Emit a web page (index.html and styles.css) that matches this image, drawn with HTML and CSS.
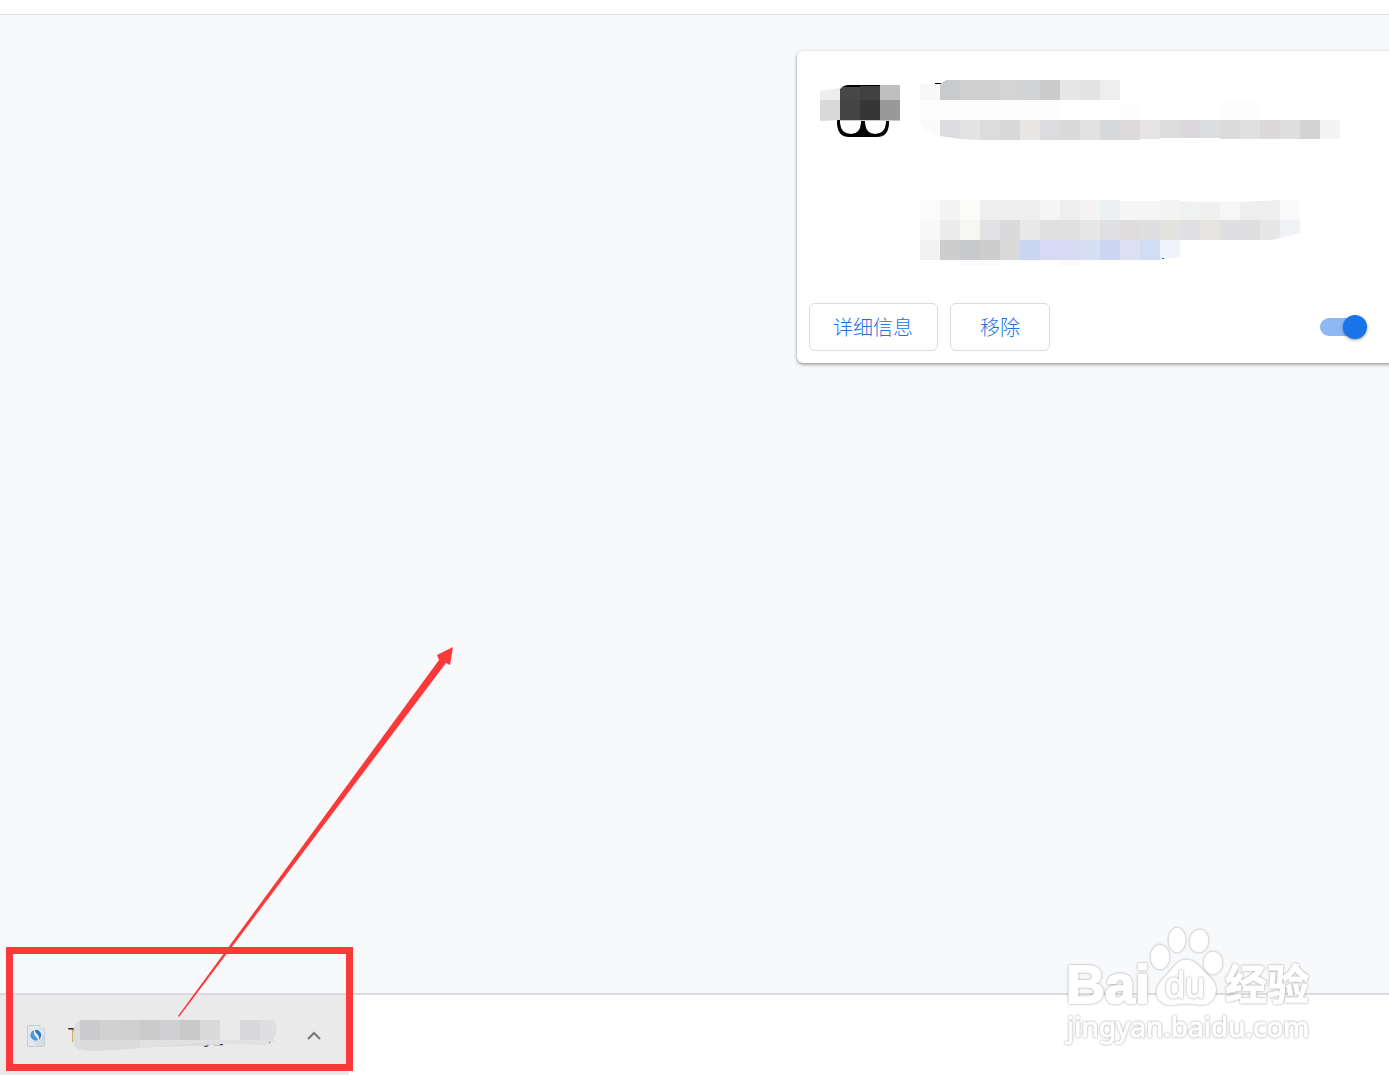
FILE: index.html
```html
<!DOCTYPE html>
<html lang="zh-CN">
<head>
<meta charset="utf-8">
<title>扩展程序</title>
<link rel="stylesheet" href="styles.css">
</head>
<body>
<header class="toolbar"></header>
<main class="extensions">
  <article class="card">
    <div class="card-body">
      <svg class="card-icon" width="80" height="54" viewBox="0 0 80 54" aria-hidden="true">
        <path d="M17 34H69V39Q68 52 57 52H29Q18 52 17 39z" fill="#000"/>
        <path d="M20 34H41V38Q40 49 31 49Q21 49 20 38z" fill="#fff"/>
        <path d="M45 34H66V38Q65 49 55 49Q46 49 45 38z" fill="#fff"/>
        <path d="M0 6L20 3V16H0z" fill="#eee"/>
        <path d="M0 15H20V35L0 36z" fill="#d9d9d9"/>
        <path d="M20 4Q24 0 30 0H60V15H20z" fill="#474747"/>
        <path d="M22 2Q25 0 30 0H60V1H43V2z" fill="#000"/>
        <path d="M40 1H60V15H40z" fill="#404040"/>
        <path d="M60 0H80V15H60z" fill="#bfbfbf"/>
        <path d="M20 15H40V35H20z" fill="#444"/>
        <path d="M40 15H60V35H40z" fill="#363636"/>
        <path d="M60 15H80V35H60z" fill="#999"/>
        <path d="M20 35H80V36H20z" fill="#ccc"/>
      </svg>
      <svg class="card-text" width="420" height="188" viewBox="0 0 420 188" aria-hidden="true">
        <path d="M0 4H20V20H0z" fill="#f9f8f7"/>
        <path d="M15 3h8v1h-8z" fill="#000"/>
        <path d="M20 4L26 0H40V20H20z" fill="#c9cacc"/>
        <path d="M40 0H80V20H40z" fill="#cfcfcf"/>
        <path d="M80 0H100V20H80z" fill="#d4d4d4"/>
        <path d="M100 0H120V20H100z" fill="#d1d3d5"/>
        <path d="M120 0H140V20H120z" fill="#cbcbcb"/>
        <path d="M140 0H160V20H140z" fill="#e7e7e7"/>
        <path d="M160 0H180V20H160z" fill="#e3e3e3"/>
        <path d="M180 0H200V20H180z" fill="#eee"/>
        <path d="M0 20H140V40H0zM200 25h20v15h-20zM300 20h40v20h-40z" fill="#fdfdfd"/>
        <path d="M0 40H20V56Q5 54 0 40z" fill="#fbfaf8"/>
        <path d="M20 40H40V59L20 56z" fill="#dcdcde"/>
        <path d="M40 40H60V60L40 59z" fill="#e3e3e4"/>
        <path d="M60 40h20v20h-20z" fill="#dedbdc"/>
        <path d="M80 40h20v20h-20z" fill="#d8d8da"/>
        <path d="M100 40h20v20h-20z" fill="#e9e7e5"/>
        <path d="M120 40h20v20h-20z" fill="#dcdcde"/>
        <path d="M140 40h20v20h-20z" fill="#dbd9da"/>
        <path d="M160 40h20v20h-20z" fill="#e2e2e2"/>
        <path d="M180 40h20v20h-20z" fill="#d6d8da"/>
        <path d="M200 40h20v20h-20z" fill="#dddadb"/>
        <path d="M220 40h20v19h-20z" fill="#e6e4e5"/>
        <path d="M240 40h20v18h-20z" fill="#ddd"/>
        <path d="M260 40h20v18h-20z" fill="#dbd9dc"/>
        <path d="M280 40h20v18h-20z" fill="#dcdde0"/>
        <path d="M300 40h20v19h-20z" fill="#dbdbdb"/>
        <path d="M320 40h20v19h-20z" fill="#e0e0e3"/>
        <path d="M340 40h20v19h-20z" fill="#dbd9da"/>
        <path d="M360 40h20v19h-20z" fill="#dfdfdf"/>
        <path d="M380 40h20v19h-20z" fill="#d3d3d5"/>
        <path d="M400 40h20v19h-20z" fill="#f4f4f4"/>
        <path d="M0 120h20v20H0z" fill="#fbfbfb"/>
        <path d="M20 120h20v20h-20z" fill="#f3f3f3"/>
        <path d="M40 120h20v20h-20z" fill="#fbfcf8"/>
        <path d="M60 120h60v20h-60z" fill="#eee"/>
        <path d="M120 120h20v20h-20z" fill="#f5f5f5"/>
        <path d="M140 120h20v20h-20z" fill="#eee"/>
        <path d="M160 120h20v20h-20z" fill="#f5f3f4"/>
        <path d="M180 120h20v20h-20z" fill="#edf0f2"/>
        <path d="M200 121h40v19h-40z" fill="#f5f5f5"/>
        <path d="M240 120h20v20h-20z" fill="#f5f3f1"/>
        <path d="M260 121l20 1v18h-20z" fill="#eff2f0"/>
        <path d="M280 122h20v18h-20z" fill="#f0f0f0"/>
        <path d="M300 122h20v18h-20z" fill="#f6f6f7"/>
        <path d="M320 122l40-2v20h-40z" fill="#eee"/>
        <path d="M360 120h20v20h-20z" fill="#fafafa"/>
        <path d="M0 140h20v20H0z" fill="#f8f8f8"/>
        <path d="M20 140h20v20h-20z" fill="#ececec"/>
        <path d="M40 140h20v20h-20z" fill="#f6f6f3"/>
        <path d="M60 140h20v20h-20z" fill="#e2e2e4"/>
        <path d="M80 140h20v20h-20z" fill="#dadadc"/>
        <path d="M100 140h20v20h-20z" fill="#e8e8e8"/>
        <path d="M120 140h40v20h-40z" fill="#e0e0e0"/>
        <path d="M160 140h20v20h-20z" fill="#e9e6e7"/>
        <path d="M180 140h20v20h-20z" fill="#e0e0e2"/>
        <path d="M200 140h20v20h-20z" fill="#dfdcdd"/>
        <path d="M220 140h20v20h-20z" fill="#dfdfe1"/>
        <path d="M240 140h20v20h-20z" fill="#e3e2df"/>
        <path d="M260 140h20v20h-20z" fill="#e0e0e3"/>
        <path d="M280 140h20v20h-20z" fill="#e6e4e1"/>
        <path d="M300 140h40v20h-40z" fill="#dfdfe1"/>
        <path d="M340 140h20v18l-8 2h-12z" fill="#e7e7e7"/>
        <path d="M360 140h20v13l-20 5z" fill="#eff1f4"/>
        <path d="M0 160h20v20H0z" fill="#f2f2f2"/>
        <path d="M20 160h20v20h-20z" fill="#cdcdcd"/>
        <path d="M40 160h20v20h-20z" fill="#c8c9cb"/>
        <path d="M60 160h20v20h-20z" fill="#cfcccd"/>
        <path d="M80 160h20v20h-20z" fill="#d9d9da"/>
        <path d="M100 160h20v20h-20z" fill="#cad5f2"/>
        <path d="M120 160h40v20h-40z" fill="#d7daf4"/>
        <path d="M160 160h20v20h-20z" fill="#d7dff4"/>
        <path d="M180 160h20v20h-20z" fill="#ccd6f1"/>
        <path d="M200 160h20v20h-20z" fill="#dce1f4"/>
        <path d="M220 160h20v20h-20z" fill="#d2ddf3"/>
        <path d="M240 160h20v17l-20 2z" fill="#f1f3fc"/>
        <path d="M242 178h2v1h-2z" fill="#1a5ee0"/>
        <path d="M40 180h40v6H40zM140 180h20v6h-20z" fill="#fbfbfd"/>
      </svg>
    </div>
    <div class="card-actions">
      <button class="btn btn-details" type="button">详细信息</button>
      <button class="btn btn-remove" type="button">移除</button>
      <input class="toggle" type="checkbox" aria-label="启用" checked>
    </div>
  </article>
</main>
<footer class="shelf">
  <div class="download">
    <svg class="file-icon" width="20" height="24" viewBox="0 0 20 24" aria-hidden="true">
      <path d="M1.500 1.500H14L18.500 5V22.500H1.500z" fill="#e4e7eb" stroke="#c6ccd5"/>
      <path d="M14 1V5H18" fill="#f3f4f6" stroke="#cdd3db"/>
      <path d="M6 16L14 8L18 12V22H11z" fill="#d8dbe0"/>
      <circle cx="10" cy="11" r="6" fill="#f3f6fa"/>
      <path d="M8 6C4 8 3 12 6 15C8 17 11 17 12 16C12 13 7 13 8 6z" fill="#4a9be0"/>
      <path d="M13 16C16 13 16 9 13 7C11 5 9 6 9 7C9 10 14 10 13 16z" fill="#2e7bc8"/>
    </svg>
    <svg class="file-name" width="212" height="36" viewBox="0 0 212 36" aria-hidden="true">
      <text x="0" y="24" class="name-text">T</text>
      <text x="136" y="24" class="name-text">y_</text>
      <path d="M5 14Q6 5 12 2V32Q7 30 5 24z" fill="#dcdddd"/>
      <path d="M12 22H152V27L90 29L45 32Q20 34 12 31z" fill="#dbdbdc"/>
      <path d="M72 22H208Q204 26 198 27L130 25L72 30z" fill="#e1e1e2"/>
      <path d="M12 2h20v20h-20z" fill="#cbcbcd"/>
      <path d="M32 2h20v20h-20z" fill="#d1d1d2"/>
      <path d="M52 2h20v20h-20z" fill="#cfcfcf"/>
      <path d="M72 2h20v20h-20z" fill="#cbcbcb"/>
      <path d="M92 2h20v20h-20z" fill="#d0d0d2"/>
      <path d="M112 2h20v20h-20z" fill="#c9c9c9"/>
      <path d="M132 2h20v20h-20z" fill="#dadadc"/>
      <path d="M152 2h20v20h-20z" fill="#eaeaea"/>
      <path d="M172 2h20v20h-20z" fill="#d8d8da"/>
      <path d="M192 2H205Q210 7 208 15L205 22H192z" fill="#dddfe1"/>
      <path d="M201 24h1v1h-1z" fill="#2870c8"/>
    </svg>
    <button class="menu-btn" type="button" aria-label="更多操作">
      <svg width="14" height="10" viewBox="0 0 14 10"><path d="M1 8L7 2L13 8" fill="none" stroke="#747679" stroke-width="2"/></svg>
    </button>
  </div>
</footer>
<svg class="annotation" width="460" height="435" viewBox="0 0 460 435" aria-hidden="true">
  <rect x="9.500" y="310.500" width="340" height="117" fill="none" stroke="#fc3939" stroke-width="7"/>
  <path d="M178 376L439 20L437 15L453 7L450 25L446 23L179 377z" fill="#fc3939"/>
</svg>
<svg class="watermark" width="280" height="145" viewBox="0 0 280 145">
  <g class="mark">
    <text x="16" y="93" class="mark-bai">Bai</text>
    <ellipse cx="110" cy="47" rx="9" ry="12"/>
    <ellipse cx="127" cy="30" rx="8" ry="12"/>
    <ellipse cx="149" cy="31" rx="9" ry="11" transform="rotate(8 149 31)"/>
    <ellipse cx="163" cy="53" rx="9" ry="11"/>
    <path d="M136 50C145 50 149 57 155 63C163 70 167 75 165 84C163 92 156 96 147 94Q137 92 127 94C116 96 109 93 107 84C106 76 112 70 119 63C124 57 128 50 136 50z"/>
    <text x="175" y="90" class="mark-cjk">经验</text>
    <text x="17" y="127" class="mark-url">jingyan.baidu.com</text>
  </g>
  <text x="115" y="88" class="mark mark-du">du</text>
</svg>
</body>
</html>
```
FILE: styles.css
```css
* {
  box-sizing: border-box;
}

body {
  position: relative;
  display: flex;
  flex-direction: column;
  min-height: 100vh;
  margin: 0;
  overflow-x: hidden;
  background: #fff;
  font-family: "Noto Sans", "Noto Sans CJK SC", sans-serif;
}

.toolbar {
  height: 15px;
  border-bottom: 1px solid #dfe1e5;
}

.extensions {
  flex: 1;
  display: flex;
  justify-content: flex-end;
  align-items: flex-start;
  padding-top: 36px;
  overflow: hidden;
  background: #f8f9fb;
}

.card {
  flex: none;
  width: 600px;
  margin-right: -8px;
  border-radius: 6px;
  background: #fff;
  box-shadow: 0 1px 3px rgba(60, 64, 67, 0.45), 0 2px 4px rgba(60, 64, 67, 0.2);
}

.card-body {
  display: flex;
  gap: 20px;
  padding: 29px 23px 0;
}

.card-icon {
  flex: none;
  margin-top: 5px;
}

.card-text {
  flex: none;
}

.card-actions {
  display: flex;
  align-items: center;
  gap: 12px;
  padding: 35px 30px 12px 12px;
}

.btn {
  height: 48px;
  border: 1px solid #dadce0;
  border-radius: 6px;
  background: #fff;
  color: #1a73e8;
  font-family: "Noto Sans CJK SC", sans-serif;
  font-size: 20px;
  font-weight: 300;
  line-height: 24px;
}

.btn-details {
  padding: 0 24px 0 23px;
}

.btn-remove {
  padding: 0 29px;
}

.toggle {
  position: relative;
  appearance: none;
  width: 47px;
  height: 24px;
  margin: 0 0 0 auto;
}

.toggle::before,
.toggle::after {
  position: absolute;
  content: "";
}

.toggle::before {
  top: 3px;
  left: 0;
  width: 42px;
  height: 18px;
  border-radius: 9px;
  background: #8cb8f3;
}

.toggle::after {
  top: 0;
  right: 0;
  width: 24px;
  height: 24px;
  border-radius: 50%;
  background: #1a73e8;
  box-shadow: 0 1px 3px rgba(0, 0, 0, 0.4);
}

.shelf {
  display: flex;
  height: 82px;
  border-top: 2px solid #d9dbe0;
}

.download {
  display: flex;
  align-items: center;
  width: 349px;
  padding-top: 2px;
  padding-left: 26px;
  background: #eaeaea;
}

.file-name {
  margin-left: 22px;
}

.name-text {
  fill: #333;
  font-family: "Open Sans", sans-serif;
  font-size: 20px;
}

.menu-btn {
  display: flex;
  margin-left: 27px;
  padding: 0;
  border: 0;
  background: none;
}

.annotation {
  position: absolute;
  bottom: 0;
  left: 0;
  pointer-events: none;
}

.watermark {
  position: absolute;
  right: 59px;
  bottom: 20px;
  pointer-events: none;
}

.mark {
  fill: #fff;
  stroke: #fff;
  stroke-width: 1px;
  stroke-linejoin: round;
  filter: drop-shadow(0 0 1px rgba(90, 92, 96, 0.6));
}

.mark-bai {
  font: bold 54px "Liberation Sans", sans-serif;
  stroke-width: 2px;
}

.mark-du {
  font: 36px "Liberation Sans", sans-serif;
}

.mark-cjk {
  font: bold 42px "Noto Sans CJK SC", sans-serif;
}

.mark-url {
  font: 28px "Noto Sans", sans-serif;
}
```
